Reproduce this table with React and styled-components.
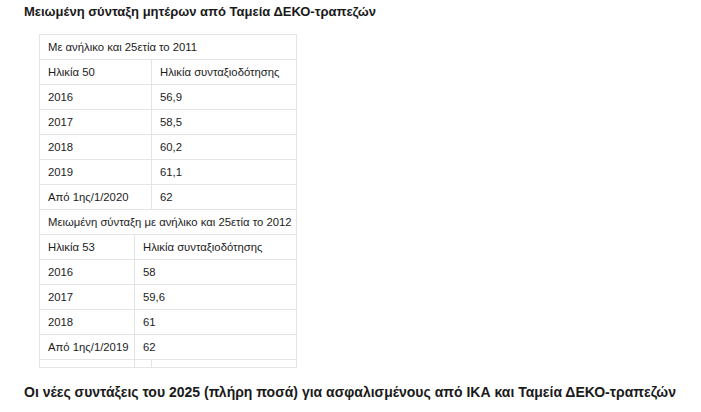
import React from 'react';
import styled, { createGlobalStyle } from 'styled-components';

const GlobalStyle = createGlobalStyle`
  body {
    margin: 0;
    background: #fff;
    font-family: "Liberation Sans", Arial, sans-serif;
    color: #1e1e1e;
  }
`;

const firstTable = {
  title: 'Με ανήλικο και 25ετία το 2011',
  head: ['Ηλικία 50', 'Ηλικία συνταξιοδότησης'],
  rows: [
    ['2016', '56,9'],
    ['2017', '58,5'],
    ['2018', '60,2'],
    ['2019', '61,1'],
    ['Από 1ης/1/2020', '62'],
  ],
};

const secondTable = {
  title: 'Μειωμένη σύνταξη με ανήλικο και 25ετία το 2012',
  head: ['Ηλικία 53', 'Ηλικία συνταξιοδότησης'],
  rows: [
    ['2016', '58'],
    ['2017', '59,6'],
    ['2018', '61'],
    ['Από 1ης/1/2019', '62'],
  ],
};

const App = () => {
  return (
    <Page>
      <GlobalStyle />
      <Heading>Μειωμένη σύνταξη μητέρων από Ταμεία ΔΕΚΟ-τραπεζών</Heading>
      <Table>
        <colgroup>
          <col style={{ width: 95 }} />
          <col style={{ width: 17 }} />
          <col style={{ width: 145 }} />
        </colgroup>
        <tbody>
          <tr>
            <Cell colSpan={3}>{firstTable.title}</Cell>
          </tr>
          {[firstTable.head, ...firstTable.rows].map((row) => (
            <tr key={row[0]}>
              <Cell colSpan={2}>{row[0]}</Cell>
              <Cell>{row[1]}</Cell>
            </tr>
          ))}
          <tr>
            <Cell colSpan={3}>{secondTable.title}</Cell>
          </tr>
          {[secondTable.head, ...secondTable.rows].map((row) => (
            <tr key={'b' + row[0]}>
              <Cell>{row[0]}</Cell>
              <Cell colSpan={2}>{row[1]}</Cell>
            </tr>
          ))}
          <tr>
            <Cell $empty />
            <Cell $empty />
            <Cell $empty />
          </tr>
        </tbody>
      </Table>
      <SubHeading>
        Οι νέες συντάξεις του 2025 (πλήρη ποσά) για ασφαλισμένους από ΙΚΑ και Ταμεία ΔΕΚΟ-τραπεζών
      </SubHeading>
    </Page>
  );
};

export default App;

const Page = styled.div`
  width: 701px;
  height: 412px;
  box-sizing: border-box;
  padding: 3px 24px 0;
  overflow: hidden;
`;

const Heading = styled.h2`
  margin: 0 0 13px;
  font-size: 13px;
  line-height: 18px;
  font-weight: 700;
  color: #1a1a1a;
`;

const Table = styled.table`
  margin-left: 15px;
  width: 258px;
  table-layout: fixed;
  border-collapse: collapse;
  border: 1px solid #e4e4e4;
`;

const Cell = styled.td`
  height: ${(p) => (p.$empty ? '8px' : '25px')};
  padding: 0 8px;
  border: 1px solid #e4e4e4;
  font-size: 11.3px;
  line-height: 14px;
  color: #1c1c1c;
  white-space: nowrap;
  overflow: hidden;
  box-sizing: border-box;
  ${(p) => p.$empty && 'padding: 0;'}
`;

const SubHeading = styled.h3`
  margin: 15px 0 0;
  font-size: 14px;
  line-height: 18px;
  font-weight: 700;
  color: #1a1a1a;
`;
